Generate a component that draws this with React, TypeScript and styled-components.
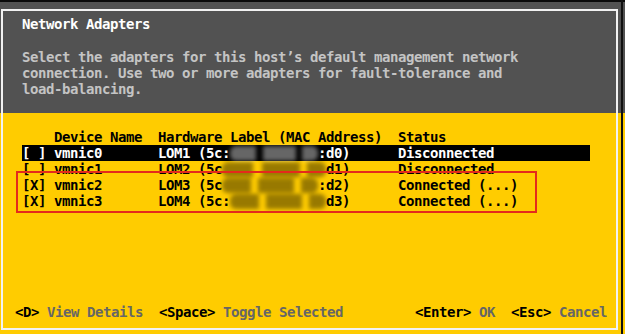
import React from "react";
import styled, { createGlobalStyle } from "styled-components";

// Console colours
const GRAY = "#525252";
const YELLOW = "#ffcc00";
const CELL = 8;

const GlobalStyle = createGlobalStyle`
  html, body {
    margin: 0;
    padding: 0;
    background: ${YELLOW};
  }
`;

interface Adapter {
  name: string;
  checked: boolean;
  label: [string, number, string];
  status: string;
}

const adapters: Adapter[] = [
  { name: "vmnic0", checked: false, label: ["LOM1 (5c:", 11, ":d0)"], status: "Disconnected" },
  { name: "vmnic1", checked: false, label: ["LOM2 (5c", 13, "d1)"], status: "Disconnected" },
  { name: "vmnic2", checked: true, label: ["LOM3 (5c", 12, ":d2)"], status: "Connected (...)" },
  { name: "vmnic3", checked: true, label: ["LOM4 (5c:", 12, "d3)"], status: "Connected (...)" },
];

const description = [
  "Select the adapters for this host\u2019s default management network",
  "connection. Use two or more adapters for fault-tolerance and",
  "load-balancing.",
];

const Screen = styled.div`
  width: 625px;
  height: 334px;
  overflow: hidden;
  display: flex;
  align-items: flex-start;
  background: linear-gradient(to bottom, #0a0a0a 0 2px, ${GRAY} 2px 113px, ${YELLOW} 113px);
  font: bold 14px/16px "DejaVu Sans Mono", monospace;
  letter-spacing: -0.43px;
  white-space: pre;
`;

const Dialog = styled.div`
  margin: 9px 0 0 1px;
  width: 617px;
  height: 321px;
  box-sizing: border-box;
  border: 2px solid #f2f2f2;
  display: flex;
  flex-direction: column;
`;

const Edge = styled.div`
  flex: 1;
  align-self: stretch;
  background: linear-gradient(to right, transparent 3px, #111 3px 5px, transparent 5px);
`;

const Header = styled.header`
  background: ${GRAY};
  height: 102px;
  box-sizing: border-box;
  padding: 5px 0 0 19px;
`;

const Title = styled.div`
  color: #ffffff;
`;

const Description = styled.div`
  margin-top: 17px;
  color: #c4c4c4;
`;

const Body = styled.section`
  flex: 1;
  display: flex;
  flex-direction: column;
  padding-top: 16px;
`;

const Table = styled.div`
  position: relative;
  width: 568px;
  margin-left: 19px;
`;

const Row = styled.div<{ $selected?: boolean }>`
  display: grid;
  grid-template-columns: ${CELL * 4}px ${CELL * 13}px ${CELL * 30}px 1fr;
  height: 16px;
  background: ${(p) => (p.$selected ? "#000" : "transparent")};
  color: ${(p) => (p.$selected ? "#fff" : "#000")};
`;

const Masked = styled.span<{ $chars: number }>`
  display: inline-block;
  width: ${(p) => p.$chars * CELL}px;
  height: 15px;
  vertical-align: -3px;
  background: linear-gradient(
    90deg,
    currentColor 0 30%,
    transparent 30% 38%,
    currentColor 38% 75%,
    transparent 75% 82%,
    currentColor 82%
  );
  opacity: 0.4;
  filter: blur(2px);
  border-radius: 6px;
`;

const Highlight = styled.div`
  position: absolute;
  left: -6px;
  top: 42px;
  width: 521px;
  height: 42px;
  box-sizing: border-box;
  border: 2px solid #e42a1c;
  pointer-events: none;
`;

const Footer = styled.footer`
  margin-top: auto;
  display: flex;
  justify-content: space-between;
  padding: 0 9px 8px 12px;
`;

const HintGroup = styled.div`
  display: flex;
  gap: 16px;
`;

const Key = styled.span`
  color: #000;
`;

const Action = styled.span`
  color: #666;
`;

const Hint = ({ keyName, action }: { keyName: string; action: string }) => (
  <span>
    <Key>{`<${keyName}>`}</Key> <Action>{action}</Action>
  </span>
);

export default function App() {
  return (
    <>
      <GlobalStyle />
      <Screen>
        <Dialog>
          <Header>
            <Title>Network Adapters</Title>
            <Description>
              {description.map((line) => (
                <div key={line}>{line}</div>
              ))}
            </Description>
          </Header>
          <Body>
            <Table>
              <Row>
                <span />
                <span>Device Name</span>
                <span>Hardware Label (MAC Address)</span>
                <span>Status</span>
              </Row>
              {adapters.map((a, i) => (
                <Row key={a.name} $selected={i === 0}>
                  <span>{a.checked ? "[X]" : "[ ]"}</span>
                  <span>{a.name}</span>
                  <span>
                    {a.label[0]}
                    <Masked $chars={a.label[1]} />
                    {a.label[2]}
                  </span>
                  <span>{a.status}</span>
                </Row>
              ))}
              <Highlight />
            </Table>
            <Footer>
              <HintGroup>
                <Hint keyName="D" action="View Details" />
                <Hint keyName="Space" action="Toggle Selected" />
              </HintGroup>
              <HintGroup>
                <Hint keyName="Enter" action="OK" />
                <Hint keyName="Esc" action="Cancel" />
              </HintGroup>
            </Footer>
          </Body>
        </Dialog>
        <Edge />
      </Screen>
    </>
  );
}
